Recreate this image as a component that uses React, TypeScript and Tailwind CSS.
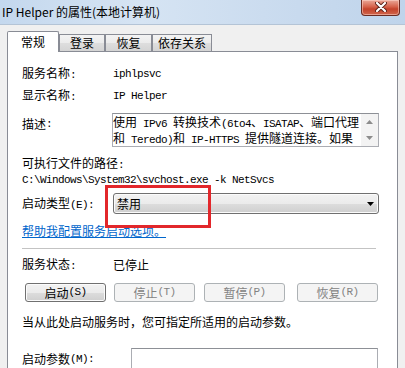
import React from "react";

// Windows 7 service properties dialog (IP Helper)

function Sim({ text }: { text: string }) {
  // SimSun-like mix: ascii runs are half width (6px), CJK full width (12px)
  const parts = text.match(/[\x00-\x7f]+|[^\x00-\x7f]+/g) ?? [];
  return (
    <>
      {parts.map((p, i) =>
        /^[\x00-\x7f]/.test(p) ? (
          <span
            key={i}
            className="whitespace-pre font-['Liberation_Mono',monospace] text-[11px] tracking-[-0.6px]"
          >
            {p}
          </span>
        ) : (
          <span key={i}>{p}</span>
        )
      )}
    </>
  );
}

function Tab({
  label,
  width,
  active = false,
}: {
  label: string;
  width: string;
  active?: boolean;
}) {
  return (
    <div
      className={`flex items-center justify-center border-x border-t border-[#898c95] ${width} ${
        active
          ? "relative z-10 -mb-px h-[21px] rounded-t-[2px] bg-white"
          : "h-[17px] bg-[linear-gradient(#f3f3f3,#ebebeb_50%,#dedede_50%,#d4d4d4)]"
      }`}
    >
      {label}
    </div>
  );
}

function Button({
  label,
  disabled = false,
  className = "",
}: {
  label: string;
  disabled?: boolean;
  className?: string;
}) {
  return (
    <div
      className={`flex h-[19px] w-[81px] items-center justify-center rounded-[3px] border ${className} ${
        disabled
          ? "border-[#adb2b5] bg-[#f4f4f4] text-[#838383]"
          : "border-[#707070] bg-[linear-gradient(#f2f2f2,#ebebeb_50%,#dddddd_50%,#cfcfcf)] shadow-[inset_0_0_0_1px_#fbfbfb]"
      }`}
    >
      <Sim text={label} />
    </div>
  );
}

export default function App() {
  return (
    <div className="relative h-[368px] w-[405px] overflow-hidden bg-[#f0f0f0] font-['Noto_Sans_CJK_SC',sans-serif] text-[12px] text-black">
      {/* title bar */}
      <div className="relative flex h-[25px] items-center border-b border-[#b4c4d6] bg-[linear-gradient(90deg,#c4d8ee,#d6e4f3_35%,#cbdcef_65%,#bfd4eb)] pl-[2px] leading-none">
        <span className="-mt-[1px]">IP Helper 的属性(本地计算机)</span>
        <div className="absolute right-[5px] top-0 flex h-[16px] w-[39px] items-center justify-center rounded-b-[4px] border border-t-0 border-[#6a2b22] bg-[linear-gradient(#eaa898,#d6624b_45%,#c4432b_60%,#d0664c)] shadow-[inset_0_0_0_1px_rgba(255,220,210,0.5)]">
          <svg width="12" height="10" viewBox="0 0 12 10" className="-mt-[2px]">
            <path d="M2 1 L10 9 M10 1 L2 9" stroke="#5a2018" strokeWidth="4" strokeLinecap="round" />
            <path d="M2 1 L10 9 M10 1 L2 9" stroke="#ffffff" strokeWidth="2.2" strokeLinecap="round" />
          </svg>
        </div>
      </div>

      <div className="px-[7px] pt-[6px]">
        {/* tabs */}
        <div className="flex h-[20px] items-end">
          <Tab label="常规" width="w-[52px]" active />
          <Tab label="登录" width="w-[46px]" />
          <Tab label="恢复" width="w-[47px]" />
          <Tab label="依存关系" width="w-[60px]" />
        </div>

        {/* panel */}
        <div className="h-[330px] w-[391px] border border-[#898c95] bg-white pl-[14px] pt-[12px]">
          <div className="flex h-[20px] items-center">
            <div className="w-[91px]">
              <Sim text="服务名称:" />
            </div>
            <Sim text="iphlpsvc" />
          </div>

          <div className="mt-[2px] flex h-[20px] items-center">
            <div className="w-[91px]">
              <Sim text="显示名称:" />
            </div>
            <Sim text="IP Helper" />
          </div>

          <div className="mt-[7px] flex items-start">
            <div className="mt-[1px] flex h-[20px] w-[90px] items-center">
              <Sim text="描述:" />
            </div>
            <div className="flex h-[34px] w-[267px] border border-[#abadb3] border-t-[#8d9096]">
              <div className="flex-1 overflow-hidden whitespace-nowrap pt-[1px] leading-[13px]">
                <div>
                  <Sim text="使用 IPv6 转换技术(6to4、ISATAP、端口代理" />
                </div>
                <div>
                  <Sim text="和 Teredo)和 IP-HTTPS 提供隧道连接。如果" />
                </div>
              </div>
              <div className="flex w-[17px] flex-col bg-[#f3f3f3]">
                <div className="flex h-[16px] items-center justify-center">
                  <svg width="7" height="4" viewBox="0 0 7 4">
                    <path d="M0 4 L3.5 0 L7 4 Z" fill="#8c8c8c" />
                  </svg>
                </div>
                <div className="flex h-[16px] items-center justify-center">
                  <svg width="7" height="4" viewBox="0 0 7 4">
                    <path d="M0 0 L7 0 L3.5 4 Z" fill="#8c8c8c" />
                  </svg>
                </div>
              </div>
            </div>
          </div>

          <div className="mt-[8px] h-[16px] leading-[16px]">
            <Sim text="可执行文件的路径:" />
          </div>
          <div className="h-[14px] leading-[14px]">
            <Sim text="C:\Windows\System32\svchost.exe -k NetSvcs" />
          </div>

          <div className="mt-[8px] flex h-[21px] items-center">
            <div className="w-[91px]">
              <Sim text="启动类型(E):" />
            </div>
            <div className="flex h-[21px] w-[266px] items-center justify-between rounded-[3px] border border-[#707070] bg-[linear-gradient(#f2f2f2,#ebebeb_50%,#dddddd_50%,#cfcfcf)] pl-[3px] pr-[4px] shadow-[inset_0_0_0_1px_#fbfbfb]">
              <span>禁用</span>
              <svg width="7" height="4" viewBox="0 0 7 4">
                <path d="M0 0 L7 0 L3.5 4 Z" fill="#000000" />
              </svg>
            </div>
          </div>

          <div className="mt-[9px] h-[16px] leading-[16px] text-[#0066cc] underline">
            帮助我配置服务启动选项。
          </div>

          <div className="mt-[9px] h-px w-[354px] bg-[#c3c3c3]" />

          <div className="mt-[8px] flex h-[16px] items-center">
            <div className="w-[91px]">
              <Sim text="服务状态:" />
            </div>
            <span>已停止</span>
          </div>

          <div className="mt-[10px] flex">
            <Button label="启动(S)" className="ml-[3px]" />
            <Button label="停止(T)" disabled className="ml-[8px]" />
            <Button label="暂停(P)" disabled className="ml-[9px]" />
            <Button label="恢复(R)" disabled className="ml-[12px]" />
          </div>

          <div className="mt-[12px] h-[16px] leading-[16px]">
            当从此处启动服务时，您可指定所适用的启动参数。
          </div>

          <div className="mt-[18px] flex items-start">
            <div className="flex h-[22px] w-[109px] items-center">
              <Sim text="启动参数(M):" />
            </div>
            <div className="h-[22px] w-[247px] border border-[#abadb3] border-t-[#8d9096] bg-white" />
          </div>
        </div>
      </div>

      {/* red highlight drawn over the screenshot */}
      <div className="absolute left-[105px] top-[185px] h-[43px] w-[106px] border-[3px] border-[#e2272b]" />
    </div>
  );
}
